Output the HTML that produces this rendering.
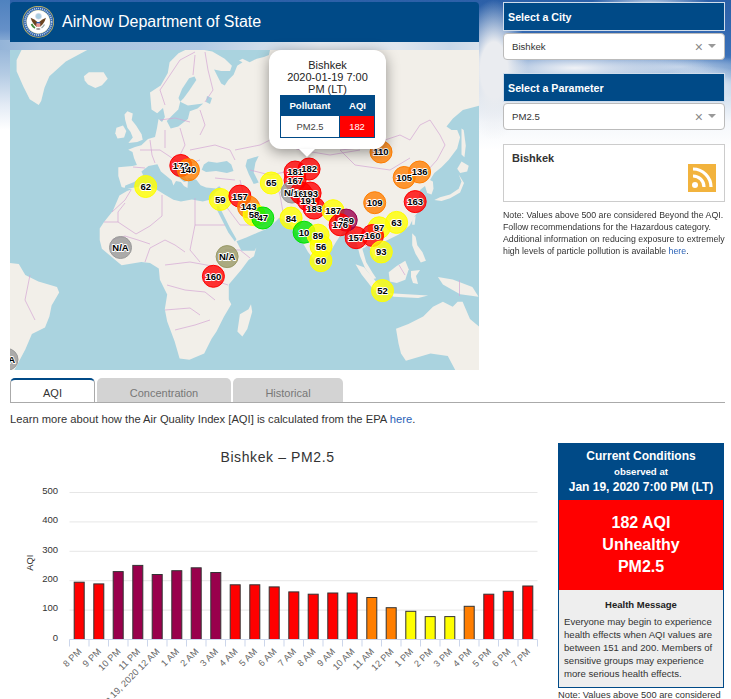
<!DOCTYPE html>
<html><head><meta charset="utf-8">
<style>
*{box-sizing:border-box;margin:0;padding:0}
html,body{width:731px;height:699px;overflow:hidden;background:#fff;font-family:"Liberation Sans",sans-serif;color:#333}
.abs{position:absolute}
#sky{position:absolute;left:0;top:0;width:731px;height:400px;
background:
 radial-gradient(ellipse 34px 70px at 494px 70px, rgba(234,236,240,1) 40%, rgba(234,236,240,0)),
 radial-gradient(ellipse 140px 22px at 575px 68px, rgba(240,242,246,1), rgba(240,242,246,0)),
 radial-gradient(ellipse 50px 18px at 705px 84px, rgba(255,255,255,.9), rgba(255,255,255,0)),
 radial-gradient(ellipse 80px 12px at 680px 67px, rgba(200,216,236,.85), rgba(200,216,236,0)),
 radial-gradient(ellipse 60px 12px at 650px 4px, rgba(235,240,248,.8), rgba(235,240,248,0)),
 linear-gradient(180deg,#2c60a8 0px,#3a70b8 55px,#86aad5 78px,#d6e2ef 98px,#f4f7fb 122px,#fff 150px);
}
#hdr{left:10px;top:2px;width:469px;height:40px;background:#004a87;border-radius:4px 4px 0 0}
#hdr .t{position:absolute;left:52px;top:11px;font-size:16px;color:#fff;line-height:18px;white-space:nowrap}
#map{left:10px;top:50px;width:469px;height:320px;background:#aad3df;overflow:hidden}
.pnl{left:503px;width:222px;height:29px;background:#004a87;color:#fff;font-weight:bold;font-size:10.7px;line-height:28px;padding-left:4px;border:1px solid #cfdceb}
.sel{left:503px;width:222px;height:27px;background:#fff;border:1px solid #bbb;border-radius:4px;font-size:9.6px;line-height:25px;padding-left:8px;color:#333}
.sel .x{position:absolute;right:21px;top:1px;font-size:14px;color:#888;font-weight:300}
.sel .arr{position:absolute;right:8px;top:10px;width:0;height:0;border-left:4px solid transparent;border-right:4px solid transparent;border-top:4px solid #999}
#cbox{left:503px;top:144px;width:222px;height:58px;background:#fff;border:1px solid #ccc}
#note{left:503px;top:208.5px;width:240px;font-size:9.3px;line-height:12.1px;color:#333;transform:scaleX(0.945);transform-origin:0 0;white-space:nowrap}
a{color:#2a62b8;text-decoration:none}
.tab{top:378px;height:24px;background:#d3d3d3;border-radius:5px 5px 0 0;color:#777;font-size:11px;text-align:center;line-height:30px}
#learn{left:10px;top:412px;font-size:11.2px;color:#333;line-height:14px;white-space:nowrap}
#cc{left:558px;top:443px;width:166px;height:245px;border:1px solid #004a87;background:#eee}
</style></head><body>
<div id="sky"></div>
<div class="abs" style="left:0;top:0;width:10px;height:160px;background:linear-gradient(180deg,#4f82bf 0px,#6590c8 30px,#94b4d8 46px,#b5cce4 75px,#e3ebf5 105px,#fff 130px)"></div>
<div class="abs" style="left:0;top:40px;width:479px;height:10px;background:linear-gradient(90deg,#94b4d8 0px,#a6c1de 40px,#b3cbe4 200px,#cfdcea 260px,#e6ebf1 320px,#dfe6ee 400px,#c9d8e9 450px,#e4e9ef 503px)"></div>
<div id="hdr" class="abs">
  <svg class="abs" style="left:12px;top:4px" width="32" height="32" viewBox="0 0 32 32">
    <circle cx="16.3" cy="15.8" r="15.9" fill="#cdb95a"/>
    <circle cx="16.3" cy="15.8" r="15.1" fill="#2c63ad"/>
    <circle cx="16.3" cy="15.8" r="13.3" fill="none" stroke="#b9cbe4" stroke-width="1.6" stroke-dasharray="1.1 0.9"/>
    <circle cx="16.3" cy="15.8" r="11.9" fill="#e9e2b0"/>
    <circle cx="16.3" cy="15.8" r="11.4" fill="#fff"/>
    <circle cx="16.5" cy="10.3" r="3" fill="#a9cde0" stroke="#dde" stroke-width=".6"/>
    <path d="M8.6 11.8 Q10.5 18 14.8 21 L15.2 15.8 Q12.5 13.5 8.6 11.8Z" fill="#6b4420"/>
    <path d="M24 11.8 Q22.1 18 17.8 21 L17.4 15.8 Q20.1 13.5 24 11.8Z" fill="#6b4420"/>
    <path d="M9.5 18 Q11 21 13 22" stroke="#3f8a3a" stroke-width="1.8" fill="none"/>
    <path d="M22.5 18.5 Q21 21 19.5 22" stroke="#9aa" stroke-width="1.4" fill="none"/>
    <rect x="14.3" y="16" width="4" height="1.6" fill="#2b5aa8"/>
    <path d="M14.3 17.6 H18.3 V20 Q16.3 22 14.3 20Z" fill="#ee9090"/>
    <ellipse cx="16.3" cy="23" rx="2.2" ry="1" fill="#999"/>
  </svg>
  <div class="t">AirNow Department of State</div>
</div>
<div id="map" class="abs">
<svg width="469" height="320" viewBox="10 50 469 320" style="position:absolute;left:0;top:0">
<rect x="10" y="50" width="469" height="320" fill="#aad3df"/>
<polygon fill="#f2efe9" points="21.5,50.0 87.2,50.0 65.8,61.5 49.4,76.3 44.5,87.8 41.2,100.9 38.7,105.0 29.7,99.3 23.1,86.1 16.6,71.3 16.6,59.9"/>
<polygon fill="#f2efe9" points="83.9,76.3 88.8,72.2 103.6,72.2 107.7,78.7 102.0,85.3 95.4,88.1 88.0,84.5 84.7,80.4"/>
<polygon fill="#f2efe9" points="150.0,92.5 160.7,85.4 167.8,72.9 169.6,62.2 178.5,53.3 185.6,49.8 203.4,49.8 212.3,51.6 224.7,58.7 231.9,65.8 230.1,71.1 221.2,71.1 214.1,69.4 217.6,76.5 221.2,83.6 224.7,85.4 228.3,80.0 233.6,74.7 237.2,65.8 242.5,62.2 239.0,60.5 242.5,58.7 249.6,62.2 256.8,58.7 263.9,56.9 268.9,55.1 270.0,50.0 479.0,50.0 479.0,105.7 462.9,110.0 452.9,118.6 446.5,126.5 451.5,130.0 457.2,130.0 460.1,137.2 457.2,148.6 448.6,160.1 441.5,167.2 434.3,173.0 430.0,180.1 432.9,181.5 433.5,188.7 431.5,194.4 427.2,193.0 425.0,186.0 420.0,190.0 418.5,197.2 422.8,206.0 414.0,216.9 409.7,225.6 398.8,234.4 385.6,241.0 378.0,246.0 377.0,256.0 374.4,259.0 369.2,245.3 362.3,248.7 366.2,262.2 372.2,272.2 376.2,278.3 373.0,279.0 365.0,268.0 360.0,256.0 356.0,240.0 352.0,232.0 344.0,230.0 336.0,242.0 330.0,252.0 325.0,261.0 320.5,267.0 316.0,262.0 308.0,252.0 300.0,238.0 292.0,226.0 284.0,220.0 279.2,217.8 274.3,222.8 266.0,229.3 257.8,232.6 246.3,237.5 236.5,241.2 241.4,250.7 254.6,250.7 256.3,247.5 254.0,256.3 248.5,260.0 241.1,269.9 228.8,284.6 228.8,299.4 231.3,304.3 223.9,316.7 216.5,331.4 211.6,338.8 204.2,353.6 189.4,359.8 179.6,358.5 174.6,341.3 167.2,321.6 164.8,309.3 167.2,294.5 159.9,279.7 158.8,268.4 150.0,263.0 141.3,261.9 121.6,265.2 115.0,259.7 101.9,248.8 99.7,240.0 99.7,228.5 104.0,222.0 112.8,211.0 119.4,195.6 127.0,191.0 132.5,189.0 128.2,189.0 121.6,186.9 118.3,176.0 118.3,167.2 132.5,166.1 136.9,165.0 134.0,158.0 132.5,152.0 128.2,149.7 135.0,147.0 141.3,145.3 148.0,139.0 155.0,137.0 157.0,128.0 158.5,119.0 162.0,122.0 164.9,117.0 163.0,108.0 157.2,113.2 151.5,109.4 150.5,97.9"/>
<polygon fill="#f2efe9" points="127.4,111.3 132.8,113.5 131.7,120.0 136.1,125.5 141.6,134.2 142.7,139.7 137.2,141.9 128.4,143.0 132.8,137.5 130.6,132.1 127.4,127.7 125.2,120.0 124.5,114.6"/>
<polygon fill="#f2efe9" points="116.4,127.7 123.0,125.5 126.3,131.0 124.1,137.5 117.5,138.6 115.3,133.2"/>
<polygon fill="#f2efe9" points="251.0,304.3 252.2,311.7 247.3,329.0 242.4,336.4 237.4,331.4 239.9,314.2 248.5,309.3"/>
<polygon fill="#f2efe9" points="461.5,128.6 463.7,130.0 465.8,145.8 464.4,157.2 461.5,154.4 461.5,140.0"/>
<polygon fill="#f2efe9" points="461.5,161.5 468.7,165.8 467.2,171.5 460.1,173.0 457.2,168.7"/>
<polygon fill="#f2efe9" points="458.7,174.4 461.5,181.5 458.7,188.7 450.1,194.4 440.0,197.3 434.3,200.0 441.5,201.0 450.1,198.3 460.1,192.6 464.0,183.0"/>
<polygon fill="#f2efe9" points="412.2,217.8 415.6,216.1 414.7,224.7 412.2,224.7"/>
<polygon fill="#f2efe9" points="412.2,233.3 415.6,236.7 417.3,245.3 422.5,252.2 425.9,260.8 420.8,262.5 415.6,253.9 412.2,245.3"/>
<polygon fill="#f2efe9" points="355.5,264.2 364.0,267.2 376.4,282.0 386.2,291.9 381.3,296.8 371.4,286.9 361.6,274.6"/>
<polygon fill="#f2efe9" points="386.2,293.1 428.1,295.6 418.2,298.0 393.6,296.8"/>
<polygon fill="#f2efe9" points="388.7,272.2 396.7,265.9 405.3,260.8 408.7,269.3 405.3,279.7 396.7,283.1 389.8,281.4"/>
<polygon fill="#f2efe9" points="411.0,271.0 420.0,270.0 416.0,276.0 418.0,284.0 413.0,283.0 411.0,277.0"/>
<polygon fill="#f2efe9" points="437.9,277.1 452.7,279.6 472.4,287.0 478.6,296.8 460.1,294.3 442.9,284.5"/>
<polygon fill="#f2efe9" points="396.0,328.8 408.4,323.9 423.2,316.5 433.0,306.7 442.9,301.7 452.7,306.7 457.6,301.7 462.6,301.7 470.0,319.0 479.0,326.4 479.0,370.0 455.2,370.0 447.8,355.9 430.5,353.4 405.9,360.8 401.0,353.4 398.5,343.6"/>
<polygon fill="#f2efe9" points="10.0,263.0 18.8,264.0 25.3,275.0 38.4,281.6 57.0,287.0 59.2,292.5 51.6,305.6 49.4,316.6 45.0,327.5 31.9,334.0 25.3,349.4 14.4,370.0 10.0,370.0"/>
<polygon fill="#aad3df" points="124.0,190.0 125.3,185.6 134.2,182.0 143.1,174.9 141.4,171.4 148.5,166.0 157.4,164.2 160.9,171.4 171.6,180.2 173.4,185.6 176.0,181.0 180.9,181.9 184.0,186.0 187.5,188.0 188.0,180.0 187.5,177.5 196.3,179.7 200.6,185.2 206.1,187.4 216.0,188.4 219.2,186.3 221.4,188.4 216.0,191.7 210.5,199.4 202.8,201.6 191.9,199.4 180.9,201.6 173.4,199.8 164.5,194.5 155.6,189.1 144.9,185.6 134.2,187.4 127.1,189.1"/>
<polygon fill="#aad3df" points="172.0,166.0 176.0,168.0 184.0,176.0 188.0,181.0 184.0,182.0 176.0,175.0 170.0,169.0"/>
<polygon fill="#aad3df" points="201.7,169.8 203.9,164.4 208.3,161.6 217.0,162.7 226.9,161.1 231.3,164.4 233.5,170.9 226.9,173.1 216.0,170.9 206.1,172.0"/>
<polygon fill="#aad3df" points="247.2,159.4 258.7,156.1 255.4,162.7 253.7,172.5 258.7,182.4 253.7,184.0 248.8,174.2 245.5,166.0"/>
<polygon fill="#aad3df" points="194.5,76.5 196.3,80.0 189.1,90.7 183.8,98.0 180.2,101.7 178.5,98.0 182.0,88.9 189.1,78.2"/>
<polygon fill="#aad3df" points="180.2,101.7 187.9,105.6 203.2,103.6 197.5,108.4 189.8,111.3 187.9,119.0 178.3,126.6 170.7,128.5 166.8,120.9 172.6,115.1 178.3,109.4"/>
<polygon fill="#aad3df" points="216.9,206.0 219.0,206.0 229.9,227.7 236.5,239.2 234.9,241.6 228.3,232.6 217.0,210.0"/>
<polygon fill="#aad3df" points="252.0,205.0 258.0,208.0 266.0,214.0 270.0,216.0 266.0,218.0 258.0,214.0 252.0,210.0"/>
<polygon fill="#aad3df" points="207.0,96.0 212.0,98.0 210.0,104.0 206.0,102.0"/>
<polyline fill="none" stroke="#d4a6d4" stroke-width="0.7" points="131.0,190.0 125.0,200.0 112.0,212.0"/>
<polyline fill="none" stroke="#d4a6d4" stroke-width="0.7" points="104.0,222.0 118.0,222.0 118.0,212.0 125.0,203.0"/>
<polyline fill="none" stroke="#d4a6d4" stroke-width="0.7" points="118.0,222.0 136.0,234.0 150.0,226.0 162.0,216.0"/>
<polyline fill="none" stroke="#d4a6d4" stroke-width="0.7" points="112.0,240.0 125.0,236.0 138.0,240.0 150.0,244.0"/>
<polyline fill="none" stroke="#d4a6d4" stroke-width="0.7" points="162.0,195.0 162.0,216.0"/>
<polyline fill="none" stroke="#d4a6d4" stroke-width="0.7" points="195.0,198.0 195.0,225.0"/>
<polyline fill="none" stroke="#d4a6d4" stroke-width="0.7" points="195.0,225.0 190.0,250.0 200.0,262.0"/>
<polyline fill="none" stroke="#d4a6d4" stroke-width="0.7" points="195.0,225.0 225.0,225.0"/>
<polyline fill="none" stroke="#d4a6d4" stroke-width="0.7" points="145.0,262.0 150.0,248.0 165.0,240.0 175.0,245.0 185.0,252.0"/>
<polyline fill="none" stroke="#d4a6d4" stroke-width="0.7" points="165.0,265.0 190.0,262.0 212.0,266.0"/>
<polyline fill="none" stroke="#d4a6d4" stroke-width="0.7" points="225.0,250.0 240.0,250.0 250.0,258.0"/>
<polyline fill="none" stroke="#d4a6d4" stroke-width="0.7" points="213.0,280.0 228.0,285.0"/>
<polyline fill="none" stroke="#d4a6d4" stroke-width="0.7" points="167.0,285.0 185.0,290.0 205.0,292.0 215.0,300.0"/>
<polyline fill="none" stroke="#d4a6d4" stroke-width="0.7" points="165.0,310.0 190.0,308.0 200.0,315.0"/>
<polyline fill="none" stroke="#d4a6d4" stroke-width="0.7" points="175.0,330.0 195.0,325.0 210.0,320.0"/>
<polyline fill="none" stroke="#d4a6d4" stroke-width="0.7" points="133.0,167.0 145.0,168.0"/>
<polyline fill="none" stroke="#d4a6d4" stroke-width="0.7" points="150.0,140.0 152.0,155.0 155.0,163.0"/>
<polyline fill="none" stroke="#d4a6d4" stroke-width="0.7" points="165.0,130.0 165.0,148.0"/>
<polyline fill="none" stroke="#d4a6d4" stroke-width="0.7" points="180.0,128.0 185.0,145.0 180.0,155.0"/>
<polyline fill="none" stroke="#d4a6d4" stroke-width="0.7" points="165.0,105.0 160.0,90.0 170.0,75.0 180.0,60.0 195.0,52.0"/>
<polyline fill="none" stroke="#d4a6d4" stroke-width="0.7" points="195.0,55.0 193.0,75.0"/>
<polyline fill="none" stroke="#d4a6d4" stroke-width="0.7" points="205.0,52.0 208.0,70.0 213.0,90.0 205.0,102.0"/>
<polyline fill="none" stroke="#d4a6d4" stroke-width="0.7" points="200.0,110.0 205.0,125.0 200.0,135.0"/>
<polyline fill="none" stroke="#d4a6d4" stroke-width="0.7" points="190.0,150.0 215.0,145.0 230.0,150.0 235.0,160.0"/>
<polyline fill="none" stroke="#d4a6d4" stroke-width="0.7" points="235.0,150.0 260.0,145.0 270.0,140.0 300.0,150.0 330.0,155.0 360.0,150.0"/>
<polyline fill="none" stroke="#d4a6d4" stroke-width="0.7" points="215.0,178.0 235.0,180.0"/>
<polyline fill="none" stroke="#d4a6d4" stroke-width="0.7" points="240.0,180.0 245.0,200.0 255.0,208.0"/>
<polyline fill="none" stroke="#d4a6d4" stroke-width="0.7" points="275.0,180.0 280.0,195.0 283.0,212.0"/>
<polyline fill="none" stroke="#d4a6d4" stroke-width="0.7" points="225.0,205.0 240.0,225.0 262.0,225.0 272.0,218.0"/>
<polyline fill="none" stroke="#d4a6d4" stroke-width="0.7" points="340.0,150.0 360.0,148.0 385.0,140.0 400.0,135.0 410.0,140.0"/>
<polyline fill="none" stroke="#d4a6d4" stroke-width="0.7" points="410.0,140.0 420.0,125.0 430.0,120.0 440.0,135.0 445.0,145.0 437.0,160.0 428.0,170.0"/>
<polyline fill="none" stroke="#d4a6d4" stroke-width="0.7" points="300.0,190.0 320.0,205.0 340.0,210.0"/>
<polyline fill="none" stroke="#d4a6d4" stroke-width="0.7" points="350.0,225.0 360.0,240.0 370.0,250.0"/>
<polyline fill="none" stroke="#d4a6d4" stroke-width="0.7" points="340.0,150.0 355.0,165.0 390.0,170.0 410.0,158.0"/>
<polyline fill="none" stroke="#d4a6d4" stroke-width="0.7" points="250.0,170.0 270.0,175.0 285.0,172.0"/>
<polyline fill="none" stroke="#d4a6d4" stroke-width="0.7" points="459.5,280.0 459.5,296.0"/>
<polyline fill="none" stroke="#d4a6d4" stroke-width="0.7" points="160.0,120.0 175.0,118.0 190.0,122.0"/>
<polyline fill="none" stroke="#d4a6d4" stroke-width="0.7" points="140.0,150.0 160.0,150.0 175.0,160.0 190.0,165.0"/>
<polyline fill="none" stroke="#d4a6d4" stroke-width="0.7" points="170.0,165.0 185.0,165.0 200.0,160.0"/>
<polyline fill="none" stroke="#d4a6d4" stroke-width="0.7" points="399.0,265.0 405.0,275.0"/>
<polyline fill="none" stroke="#d4a6d4" stroke-width="0.7" points="30.0,275.0 25.0,300.0 35.0,320.0"/>
<circle cx="7" cy="359.5" r="11" fill="#999999" fill-opacity="0.8" stroke="#999999" stroke-width="1"/>
<circle cx="120.5" cy="247.5" r="11" fill="#999999" fill-opacity="0.8" stroke="#999999" stroke-width="1"/>
<circle cx="145.7" cy="186.5" r="11" fill="#ffff00" fill-opacity="0.8" stroke="#ffff00" stroke-width="1"/>
<circle cx="180.8" cy="165.5" r="11" fill="#ff0000" fill-opacity="0.8" stroke="#ff0000" stroke-width="1"/>
<circle cx="188.4" cy="169.8" r="11" fill="#ff7e00" fill-opacity="0.8" stroke="#ff7e00" stroke-width="1"/>
<circle cx="220.2" cy="199.4" r="11" fill="#ffff00" fill-opacity="0.8" stroke="#ffff00" stroke-width="1"/>
<circle cx="239.9" cy="196.1" r="11" fill="#ff0000" fill-opacity="0.8" stroke="#ff0000" stroke-width="1"/>
<circle cx="248.6" cy="207" r="11" fill="#ff7e00" fill-opacity="0.8" stroke="#ff7e00" stroke-width="1"/>
<circle cx="254.1" cy="214.7" r="11" fill="#ffff00" fill-opacity="0.8" stroke="#ffff00" stroke-width="1"/>
<circle cx="262.8" cy="218" r="11" fill="#00e400" fill-opacity="0.8" stroke="#00e400" stroke-width="1"/>
<circle cx="227.1" cy="256.6" r="11" fill="#999966" fill-opacity="0.8" stroke="#999966" stroke-width="1"/>
<circle cx="213.4" cy="276.3" r="11" fill="#ff0000" fill-opacity="0.8" stroke="#ff0000" stroke-width="1"/>
<circle cx="271.3" cy="183" r="11" fill="#ffff00" fill-opacity="0.8" stroke="#ffff00" stroke-width="1"/>
<circle cx="381" cy="152" r="11" fill="#ff7e00" fill-opacity="0.8" stroke="#ff7e00" stroke-width="1"/>
<circle cx="404.2" cy="177.5" r="11" fill="#ff7e00" fill-opacity="0.8" stroke="#ff7e00" stroke-width="1"/>
<circle cx="419.6" cy="172" r="11" fill="#ff7e00" fill-opacity="0.8" stroke="#ff7e00" stroke-width="1"/>
<circle cx="415.2" cy="201.6" r="11" fill="#ff0000" fill-opacity="0.8" stroke="#ff0000" stroke-width="1"/>
<circle cx="374.7" cy="202.7" r="11" fill="#ff7e00" fill-opacity="0.8" stroke="#ff7e00" stroke-width="1"/>
<circle cx="396.6" cy="222.4" r="11" fill="#ffff00" fill-opacity="0.8" stroke="#ffff00" stroke-width="1"/>
<circle cx="379.1" cy="227.8" r="11" fill="#ffff00" fill-opacity="0.8" stroke="#ffff00" stroke-width="1"/>
<circle cx="356.1" cy="237.7" r="11" fill="#ff0000" fill-opacity="0.8" stroke="#ff0000" stroke-width="1"/>
<circle cx="372.5" cy="235.5" r="11" fill="#ff0000" fill-opacity="0.8" stroke="#ff0000" stroke-width="1"/>
<circle cx="381.3" cy="251.9" r="11" fill="#ffff00" fill-opacity="0.8" stroke="#ffff00" stroke-width="1"/>
<circle cx="382.5" cy="290.6" r="11" fill="#ffff00" fill-opacity="0.8" stroke="#ffff00" stroke-width="1"/>
<circle cx="295.1" cy="172" r="11" fill="#ff0000" fill-opacity="0.8" stroke="#ff0000" stroke-width="1"/>
<circle cx="295.1" cy="180.1" r="11" fill="#ff0000" fill-opacity="0.8" stroke="#ff0000" stroke-width="1"/>
<circle cx="309.1" cy="169" r="11" fill="#ff0000" fill-opacity="0.8" stroke="#ff0000" stroke-width="1"/>
<circle cx="292.1" cy="192.1" r="11" fill="#999999" fill-opacity="0.8" stroke="#999999" stroke-width="1"/>
<circle cx="301.1" cy="193.1" r="11" fill="#ff0000" fill-opacity="0.8" stroke="#ff0000" stroke-width="1"/>
<circle cx="310.1" cy="193.1" r="11" fill="#ff0000" fill-opacity="0.8" stroke="#ff0000" stroke-width="1"/>
<circle cx="308.1" cy="200.1" r="11" fill="#ff0000" fill-opacity="0.8" stroke="#ff0000" stroke-width="1"/>
<circle cx="314.1" cy="208.1" r="11" fill="#ff0000" fill-opacity="0.8" stroke="#ff0000" stroke-width="1"/>
<circle cx="291.1" cy="218.1" r="11" fill="#ffff00" fill-opacity="0.8" stroke="#ffff00" stroke-width="1"/>
<circle cx="304.1" cy="232.2" r="11" fill="#00e400" fill-opacity="0.8" stroke="#00e400" stroke-width="1"/>
<circle cx="318.1" cy="235.2" r="11" fill="#ffff00" fill-opacity="0.8" stroke="#ffff00" stroke-width="1"/>
<circle cx="321.1" cy="246.2" r="11" fill="#ffff00" fill-opacity="0.8" stroke="#ffff00" stroke-width="1"/>
<circle cx="320.9" cy="260.6" r="11" fill="#ffff00" fill-opacity="0.8" stroke="#ffff00" stroke-width="1"/>
<circle cx="333.1" cy="210.7" r="11" fill="#ffff00" fill-opacity="0.8" stroke="#ffff00" stroke-width="1"/>
<circle cx="346.2" cy="220.1" r="11" fill="#99004c" fill-opacity="0.8" stroke="#99004c" stroke-width="1"/>
<circle cx="340.2" cy="224.8" r="11" fill="#ff0000" fill-opacity="0.8" stroke="#ff0000" stroke-width="1"/>
<text x="7" y="362.9" text-anchor="middle" font-size="9.5" font-weight="bold" fill="#000" stroke="#fff" stroke-width="1.9" paint-order="stroke" stroke-linejoin="round">N/A</text>
<text x="120.5" y="250.9" text-anchor="middle" font-size="9.5" font-weight="bold" fill="#000" stroke="#fff" stroke-width="1.9" paint-order="stroke" stroke-linejoin="round">N/A</text>
<text x="145.7" y="189.9" text-anchor="middle" font-size="9.5" font-weight="bold" fill="#000" stroke="#fff" stroke-width="1.9" paint-order="stroke" stroke-linejoin="round">62</text>
<text x="180.8" y="168.9" text-anchor="middle" font-size="9.5" font-weight="bold" fill="#000" stroke="#fff" stroke-width="1.9" paint-order="stroke" stroke-linejoin="round">172</text>
<text x="188.4" y="173.2" text-anchor="middle" font-size="9.5" font-weight="bold" fill="#000" stroke="#fff" stroke-width="1.9" paint-order="stroke" stroke-linejoin="round">140</text>
<text x="220.2" y="202.8" text-anchor="middle" font-size="9.5" font-weight="bold" fill="#000" stroke="#fff" stroke-width="1.9" paint-order="stroke" stroke-linejoin="round">59</text>
<text x="239.9" y="199.5" text-anchor="middle" font-size="9.5" font-weight="bold" fill="#000" stroke="#fff" stroke-width="1.9" paint-order="stroke" stroke-linejoin="round">157</text>
<text x="248.6" y="210.4" text-anchor="middle" font-size="9.5" font-weight="bold" fill="#000" stroke="#fff" stroke-width="1.9" paint-order="stroke" stroke-linejoin="round">143</text>
<text x="254.1" y="218.1" text-anchor="middle" font-size="9.5" font-weight="bold" fill="#000" stroke="#fff" stroke-width="1.9" paint-order="stroke" stroke-linejoin="round">58</text>
<text x="262.8" y="221.4" text-anchor="middle" font-size="9.5" font-weight="bold" fill="#000" stroke="#fff" stroke-width="1.9" paint-order="stroke" stroke-linejoin="round">47</text>
<text x="227.1" y="260.0" text-anchor="middle" font-size="9.5" font-weight="bold" fill="#000" stroke="#fff" stroke-width="1.9" paint-order="stroke" stroke-linejoin="round">N/A</text>
<text x="213.4" y="279.7" text-anchor="middle" font-size="9.5" font-weight="bold" fill="#000" stroke="#fff" stroke-width="1.9" paint-order="stroke" stroke-linejoin="round">160</text>
<text x="271.3" y="186.4" text-anchor="middle" font-size="9.5" font-weight="bold" fill="#000" stroke="#fff" stroke-width="1.9" paint-order="stroke" stroke-linejoin="round">65</text>
<text x="381" y="155.4" text-anchor="middle" font-size="9.5" font-weight="bold" fill="#000" stroke="#fff" stroke-width="1.9" paint-order="stroke" stroke-linejoin="round">110</text>
<text x="404.2" y="180.9" text-anchor="middle" font-size="9.5" font-weight="bold" fill="#000" stroke="#fff" stroke-width="1.9" paint-order="stroke" stroke-linejoin="round">105</text>
<text x="419.6" y="175.4" text-anchor="middle" font-size="9.5" font-weight="bold" fill="#000" stroke="#fff" stroke-width="1.9" paint-order="stroke" stroke-linejoin="round">136</text>
<text x="415.2" y="205.0" text-anchor="middle" font-size="9.5" font-weight="bold" fill="#000" stroke="#fff" stroke-width="1.9" paint-order="stroke" stroke-linejoin="round">163</text>
<text x="374.7" y="206.1" text-anchor="middle" font-size="9.5" font-weight="bold" fill="#000" stroke="#fff" stroke-width="1.9" paint-order="stroke" stroke-linejoin="round">109</text>
<text x="396.6" y="225.8" text-anchor="middle" font-size="9.5" font-weight="bold" fill="#000" stroke="#fff" stroke-width="1.9" paint-order="stroke" stroke-linejoin="round">63</text>
<text x="379.1" y="231.2" text-anchor="middle" font-size="9.5" font-weight="bold" fill="#000" stroke="#fff" stroke-width="1.9" paint-order="stroke" stroke-linejoin="round">97</text>
<text x="356.1" y="241.1" text-anchor="middle" font-size="9.5" font-weight="bold" fill="#000" stroke="#fff" stroke-width="1.9" paint-order="stroke" stroke-linejoin="round">157</text>
<text x="372.5" y="238.9" text-anchor="middle" font-size="9.5" font-weight="bold" fill="#000" stroke="#fff" stroke-width="1.9" paint-order="stroke" stroke-linejoin="round">160</text>
<text x="381.3" y="255.3" text-anchor="middle" font-size="9.5" font-weight="bold" fill="#000" stroke="#fff" stroke-width="1.9" paint-order="stroke" stroke-linejoin="round">93</text>
<text x="382.5" y="294.0" text-anchor="middle" font-size="9.5" font-weight="bold" fill="#000" stroke="#fff" stroke-width="1.9" paint-order="stroke" stroke-linejoin="round">52</text>
<text x="295.1" y="175.4" text-anchor="middle" font-size="9.5" font-weight="bold" fill="#000" stroke="#fff" stroke-width="1.9" paint-order="stroke" stroke-linejoin="round">181</text>
<text x="295.1" y="183.5" text-anchor="middle" font-size="9.5" font-weight="bold" fill="#000" stroke="#fff" stroke-width="1.9" paint-order="stroke" stroke-linejoin="round">167</text>
<text x="309.1" y="172.4" text-anchor="middle" font-size="9.5" font-weight="bold" fill="#000" stroke="#fff" stroke-width="1.9" paint-order="stroke" stroke-linejoin="round">182</text>
<text x="292.1" y="195.5" text-anchor="middle" font-size="9.5" font-weight="bold" fill="#000" stroke="#fff" stroke-width="1.9" paint-order="stroke" stroke-linejoin="round">N/A</text>
<text x="301.1" y="196.5" text-anchor="middle" font-size="9.5" font-weight="bold" fill="#000" stroke="#fff" stroke-width="1.9" paint-order="stroke" stroke-linejoin="round">161</text>
<text x="310.1" y="196.5" text-anchor="middle" font-size="9.5" font-weight="bold" fill="#000" stroke="#fff" stroke-width="1.9" paint-order="stroke" stroke-linejoin="round">193</text>
<text x="308.1" y="203.5" text-anchor="middle" font-size="9.5" font-weight="bold" fill="#000" stroke="#fff" stroke-width="1.9" paint-order="stroke" stroke-linejoin="round">191</text>
<text x="314.1" y="211.5" text-anchor="middle" font-size="9.5" font-weight="bold" fill="#000" stroke="#fff" stroke-width="1.9" paint-order="stroke" stroke-linejoin="round">183</text>
<text x="291.1" y="221.5" text-anchor="middle" font-size="9.5" font-weight="bold" fill="#000" stroke="#fff" stroke-width="1.9" paint-order="stroke" stroke-linejoin="round">84</text>
<text x="304.1" y="235.6" text-anchor="middle" font-size="9.5" font-weight="bold" fill="#000" stroke="#fff" stroke-width="1.9" paint-order="stroke" stroke-linejoin="round">10</text>
<text x="318.1" y="238.6" text-anchor="middle" font-size="9.5" font-weight="bold" fill="#000" stroke="#fff" stroke-width="1.9" paint-order="stroke" stroke-linejoin="round">89</text>
<text x="321.1" y="249.6" text-anchor="middle" font-size="9.5" font-weight="bold" fill="#000" stroke="#fff" stroke-width="1.9" paint-order="stroke" stroke-linejoin="round">56</text>
<text x="320.9" y="264.0" text-anchor="middle" font-size="9.5" font-weight="bold" fill="#000" stroke="#fff" stroke-width="1.9" paint-order="stroke" stroke-linejoin="round">60</text>
<text x="333.1" y="214.1" text-anchor="middle" font-size="9.5" font-weight="bold" fill="#000" stroke="#fff" stroke-width="1.9" paint-order="stroke" stroke-linejoin="round">187</text>
<text x="346.2" y="223.5" text-anchor="middle" font-size="9.5" font-weight="bold" fill="#000" stroke="#fff" stroke-width="1.9" paint-order="stroke" stroke-linejoin="round">269</text>
<text x="340.2" y="228.2" text-anchor="middle" font-size="9.5" font-weight="bold" fill="#000" stroke="#fff" stroke-width="1.9" paint-order="stroke" stroke-linejoin="round">176</text>
</svg>
</div>

<div id="popup" class="abs" style="left:269px;top:50px;width:117px;height:99px;background:#fff;border-radius:12px;box-shadow:0 3px 14px rgba(0,0,0,.4)">
  <div class="abs" style="left:0;top:9px;width:117px;text-align:center;font-size:11px;line-height:12px;color:#222">Bishkek<br>2020-01-19 7:00<br>PM (LT)</div>
  <div class="abs" style="left:11px;top:45px;width:95px;height:43px;background:#004a87">
    <div class="abs" style="left:0;top:0;width:60px;height:21px;color:#fff;font-weight:bold;font-size:9.6px;line-height:21px;text-align:center">Pollutant</div>
    <div class="abs" style="left:60px;top:0;width:35px;height:21px;color:#fff;font-weight:bold;font-size:9.6px;line-height:21px;text-align:center">AQI</div>
    <div class="abs" style="left:1px;top:21px;width:58px;height:21px;background:#fff;color:#444;font-size:9.4px;line-height:21px;text-align:center">PM2.5</div>
    <div class="abs" style="left:60px;top:21px;width:34px;height:21px;background:#f00;color:#fff;font-size:9.4px;line-height:21px;text-align:center">182</div>
  </div>
</div>
<div class="abs" style="left:299px;top:149px;width:0;height:0;border-left:8px solid transparent;border-right:8px solid transparent;border-top:8px solid #fff;filter:drop-shadow(0 2px 2px rgba(0,0,0,.2))"></div>
<div class="abs pnl" style="top:2px">Select a City</div>
<div class="abs sel" style="top:33px">Bishkek<span class="x">×</span><span class="arr"></span></div>
<div class="abs pnl" style="top:73px">Select a Parameter</div>
<div class="abs sel" style="top:103px">PM2.5<span class="x">×</span><span class="arr"></span></div>
<div id="cbox" class="abs">
  <div class="abs" style="left:8px;top:7px;font-weight:bold;font-size:11px;color:#333">Bishkek</div>
  <svg class="abs" style="left:184px;top:19px" width="28" height="28" viewBox="0 0 28 28">
    <rect width="28" height="28" fill="#f2b33d"/>
    <circle cx="7" cy="21" r="3" fill="#fff"/>
    <path d="M5 12 A11 11 0 0 1 16 23" stroke="#fff" stroke-width="3.2" fill="none"/>
    <path d="M5 5 A18 18 0 0 1 23 23" stroke="#fff" stroke-width="3.2" fill="none"/>
  </svg>
</div>
<div id="note" class="abs">Note: Values above 500 are considered Beyond the AQI.<br>Follow recommendations for the Hazardous category.<br>Additional information on reducing exposure to extremely<br>high levels of particle pollution is available <a>here</a>.</div>

<div class="abs" style="left:10px;top:402px;width:715px;height:1px;background:#aaa"></div>
<div class="abs tab" style="left:10px;width:85px;background:#fff;border:1px solid #aaa;border-top:2px solid #004a87;border-bottom:none;color:#333;line-height:27px">AQI</div>
<div class="abs tab" style="left:97px;width:134px">Concentration</div>
<div class="abs tab" style="left:233px;width:110px">Historical</div>
<div id="learn" class="abs">Learn more about how the Air Quality Index [AQI] is calculated from the EPA <a>here</a>.</div>

<div id="chart"><svg class="abs" style="left:0;top:430px" width="550" height="269" viewBox="0 430 550 269">
<text x="277.5" y="461.5" text-anchor="middle" font-size="14" letter-spacing="0.6" fill="#333">Bishkek – PM2.5</text>
<text x="58" y="640.7" text-anchor="end" font-size="9.5" fill="#333">0</text>
<rect x="69.5" y="609.6" width="468.0" height="1" fill="#e6e6e6"/>
<text x="58" y="611.3" text-anchor="end" font-size="9.5" fill="#333">100</text>
<rect x="69.5" y="580.2" width="468.0" height="1" fill="#e6e6e6"/>
<text x="58" y="581.9" text-anchor="end" font-size="9.5" fill="#333">200</text>
<rect x="69.5" y="550.8" width="468.0" height="1" fill="#e6e6e6"/>
<text x="58" y="552.5" text-anchor="end" font-size="9.5" fill="#333">300</text>
<rect x="69.5" y="521.4" width="468.0" height="1" fill="#e6e6e6"/>
<text x="58" y="523.1" text-anchor="end" font-size="9.5" fill="#333">400</text>
<rect x="69.5" y="492.0" width="468.0" height="1" fill="#e6e6e6"/>
<text x="58" y="493.7" text-anchor="end" font-size="9.5" fill="#333">500</text>
<text transform="translate(33,562.7) rotate(-90)" text-anchor="middle" font-size="9.3" fill="#333">AQI</text>
<rect x="74.2" y="582.2" width="10" height="57.3" fill="#ff0000" stroke="#333" stroke-width="1"/>
<rect x="93.8" y="583.9" width="10" height="55.6" fill="#ff0000" stroke="#333" stroke-width="1"/>
<rect x="113.2" y="571.6" width="10" height="67.9" fill="#99004c" stroke="#333" stroke-width="1"/>
<rect x="132.8" y="565.4" width="10" height="74.1" fill="#99004c" stroke="#333" stroke-width="1"/>
<rect x="152.2" y="574.5" width="10" height="65.0" fill="#99004c" stroke="#333" stroke-width="1"/>
<rect x="171.8" y="570.7" width="10" height="68.8" fill="#99004c" stroke="#333" stroke-width="1"/>
<rect x="191.2" y="567.8" width="10" height="71.7" fill="#99004c" stroke="#333" stroke-width="1"/>
<rect x="210.8" y="572.5" width="10" height="67.0" fill="#99004c" stroke="#333" stroke-width="1"/>
<rect x="230.2" y="584.8" width="10" height="54.7" fill="#ff0000" stroke="#333" stroke-width="1"/>
<rect x="249.8" y="584.8" width="10" height="54.7" fill="#ff0000" stroke="#333" stroke-width="1"/>
<rect x="269.2" y="586.9" width="10" height="52.6" fill="#ff0000" stroke="#333" stroke-width="1"/>
<rect x="288.8" y="591.9" width="10" height="47.6" fill="#ff0000" stroke="#333" stroke-width="1"/>
<rect x="308.2" y="594.2" width="10" height="45.3" fill="#ff0000" stroke="#333" stroke-width="1"/>
<rect x="327.8" y="593.0" width="10" height="46.5" fill="#ff0000" stroke="#333" stroke-width="1"/>
<rect x="347.2" y="593.0" width="10" height="46.5" fill="#ff0000" stroke="#333" stroke-width="1"/>
<rect x="366.8" y="597.5" width="10" height="42.0" fill="#ff7e00" stroke="#333" stroke-width="1"/>
<rect x="386.2" y="607.7" width="10" height="31.8" fill="#ff7e00" stroke="#333" stroke-width="1"/>
<rect x="405.8" y="611.3" width="10" height="28.2" fill="#ffff00" stroke="#333" stroke-width="1"/>
<rect x="425.2" y="616.6" width="10" height="22.9" fill="#ffff00" stroke="#333" stroke-width="1"/>
<rect x="444.8" y="616.6" width="10" height="22.9" fill="#ffff00" stroke="#333" stroke-width="1"/>
<rect x="464.2" y="606.3" width="10" height="33.2" fill="#ff7e00" stroke="#333" stroke-width="1"/>
<rect x="483.8" y="594.2" width="10" height="45.3" fill="#ff0000" stroke="#333" stroke-width="1"/>
<rect x="503.2" y="591.3" width="10" height="48.2" fill="#ff0000" stroke="#333" stroke-width="1"/>
<rect x="522.8" y="586.0" width="10" height="53.5" fill="#ff0000" stroke="#333" stroke-width="1"/>
<rect x="69.5" y="639.0" width="468.0" height="1" fill="#ccd6eb"/>
<rect x="69.0" y="639.5" width="1" height="7" fill="#ccd6eb"/>
<rect x="88.5" y="639.5" width="1" height="7" fill="#ccd6eb"/>
<rect x="108.0" y="639.5" width="1" height="7" fill="#ccd6eb"/>
<rect x="127.5" y="639.5" width="1" height="7" fill="#ccd6eb"/>
<rect x="147.0" y="639.5" width="1" height="7" fill="#ccd6eb"/>
<rect x="166.5" y="639.5" width="1" height="7" fill="#ccd6eb"/>
<rect x="186.0" y="639.5" width="1" height="7" fill="#ccd6eb"/>
<rect x="205.5" y="639.5" width="1" height="7" fill="#ccd6eb"/>
<rect x="225.0" y="639.5" width="1" height="7" fill="#ccd6eb"/>
<rect x="244.5" y="639.5" width="1" height="7" fill="#ccd6eb"/>
<rect x="264.0" y="639.5" width="1" height="7" fill="#ccd6eb"/>
<rect x="283.5" y="639.5" width="1" height="7" fill="#ccd6eb"/>
<rect x="303.0" y="639.5" width="1" height="7" fill="#ccd6eb"/>
<rect x="322.5" y="639.5" width="1" height="7" fill="#ccd6eb"/>
<rect x="342.0" y="639.5" width="1" height="7" fill="#ccd6eb"/>
<rect x="361.5" y="639.5" width="1" height="7" fill="#ccd6eb"/>
<rect x="381.0" y="639.5" width="1" height="7" fill="#ccd6eb"/>
<rect x="400.5" y="639.5" width="1" height="7" fill="#ccd6eb"/>
<rect x="420.0" y="639.5" width="1" height="7" fill="#ccd6eb"/>
<rect x="439.5" y="639.5" width="1" height="7" fill="#ccd6eb"/>
<rect x="459.0" y="639.5" width="1" height="7" fill="#ccd6eb"/>
<rect x="478.5" y="639.5" width="1" height="7" fill="#ccd6eb"/>
<rect x="498.0" y="639.5" width="1" height="7" fill="#ccd6eb"/>
<rect x="517.5" y="639.5" width="1" height="7" fill="#ccd6eb"/>
<rect x="537.0" y="639.5" width="1" height="7" fill="#ccd6eb"/>
<text transform="translate(82.2,652) rotate(-45)" text-anchor="end" font-size="9.2" letter-spacing="0.1" fill="#666">8 PM</text>
<text transform="translate(101.8,652) rotate(-45)" text-anchor="end" font-size="9.2" letter-spacing="0.1" fill="#666">9 PM</text>
<text transform="translate(121.2,652) rotate(-45)" text-anchor="end" font-size="9.2" letter-spacing="0.1" fill="#666">10 PM</text>
<text transform="translate(140.8,652) rotate(-45)" text-anchor="end" font-size="9.2" letter-spacing="0.1" fill="#666">11 PM</text>
<text transform="translate(160.2,652) rotate(-45)" text-anchor="end" font-size="9.2" letter-spacing="0.1" fill="#666">Jan 19, 2020 12 AM</text>
<text transform="translate(179.8,652) rotate(-45)" text-anchor="end" font-size="9.2" letter-spacing="0.1" fill="#666">1 AM</text>
<text transform="translate(199.2,652) rotate(-45)" text-anchor="end" font-size="9.2" letter-spacing="0.1" fill="#666">2 AM</text>
<text transform="translate(218.8,652) rotate(-45)" text-anchor="end" font-size="9.2" letter-spacing="0.1" fill="#666">3 AM</text>
<text transform="translate(238.2,652) rotate(-45)" text-anchor="end" font-size="9.2" letter-spacing="0.1" fill="#666">4 AM</text>
<text transform="translate(257.8,652) rotate(-45)" text-anchor="end" font-size="9.2" letter-spacing="0.1" fill="#666">5 AM</text>
<text transform="translate(277.2,652) rotate(-45)" text-anchor="end" font-size="9.2" letter-spacing="0.1" fill="#666">6 AM</text>
<text transform="translate(296.8,652) rotate(-45)" text-anchor="end" font-size="9.2" letter-spacing="0.1" fill="#666">7 AM</text>
<text transform="translate(316.2,652) rotate(-45)" text-anchor="end" font-size="9.2" letter-spacing="0.1" fill="#666">8 AM</text>
<text transform="translate(335.8,652) rotate(-45)" text-anchor="end" font-size="9.2" letter-spacing="0.1" fill="#666">9 AM</text>
<text transform="translate(355.2,652) rotate(-45)" text-anchor="end" font-size="9.2" letter-spacing="0.1" fill="#666">10 AM</text>
<text transform="translate(374.8,652) rotate(-45)" text-anchor="end" font-size="9.2" letter-spacing="0.1" fill="#666">11 AM</text>
<text transform="translate(394.2,652) rotate(-45)" text-anchor="end" font-size="9.2" letter-spacing="0.1" fill="#666">12 PM</text>
<text transform="translate(413.8,652) rotate(-45)" text-anchor="end" font-size="9.2" letter-spacing="0.1" fill="#666">1 PM</text>
<text transform="translate(433.2,652) rotate(-45)" text-anchor="end" font-size="9.2" letter-spacing="0.1" fill="#666">2 PM</text>
<text transform="translate(452.8,652) rotate(-45)" text-anchor="end" font-size="9.2" letter-spacing="0.1" fill="#666">3 PM</text>
<text transform="translate(472.2,652) rotate(-45)" text-anchor="end" font-size="9.2" letter-spacing="0.1" fill="#666">4 PM</text>
<text transform="translate(491.8,652) rotate(-45)" text-anchor="end" font-size="9.2" letter-spacing="0.1" fill="#666">5 PM</text>
<text transform="translate(511.2,652) rotate(-45)" text-anchor="end" font-size="9.2" letter-spacing="0.1" fill="#666">6 PM</text>
<text transform="translate(530.8,652) rotate(-45)" text-anchor="end" font-size="9.2" letter-spacing="0.1" fill="#666">7 PM</text>
</svg></div>

<div id="cc" class="abs">
  <div class="abs" style="left:0;top:0;width:164px;height:56px;background:#004a87;color:#fff;text-align:center;font-weight:bold">
    <div style="font-size:12px;line-height:14px;padding-top:5px">Current Conditions</div>
    <div style="font-size:9.6px;line-height:14px;margin-top:1.5px">observed at</div>
    <div style="font-size:12px;line-height:14px;margin-top:1.2px">Jan 19, 2020 7:00 PM (LT)</div>
  </div>
  <div class="abs" style="left:0;top:56px;width:164px;height:90px;background:#f00;color:#fff;text-align:center;font-weight:bold;font-size:16px;line-height:22px;padding-top:12px">182 AQI<br>Unhealthy<br>PM2.5</div>
  <div class="abs" style="left:0;top:146px;width:164px;font-size:9.5px;text-align:center;font-weight:bold;top:154.5px;color:#222">Health Message</div>
  <div class="abs" style="left:5px;top:171px;width:160px;font-size:9.6px;line-height:13px;color:#333">Everyone may begin to experience health effects when AQI values are between 151 and 200. Members of sensitive groups may experience more serious health effects.</div>
</div>
<div class="abs" style="left:558px;top:689px;font-size:9.3px;line-height:12px;color:#333;white-space:nowrap">Note: Values above 500 are considered</div>
</body></html>
